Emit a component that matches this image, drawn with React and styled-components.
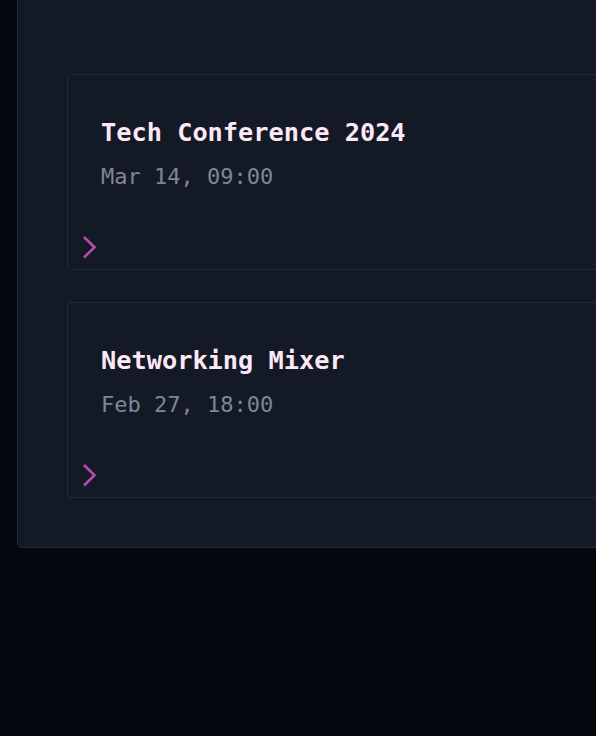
import React from 'react'
import styled, { createGlobalStyle } from 'styled-components'

const GlobalStyle = createGlobalStyle`
    html, body {
        margin: 0;
        padding: 0;
        background: #05070f;
        overflow: hidden;
    }
    body {
        font-family: "DejaVu Sans Mono", "Liberation Mono", monospace;
    }
`;

const Panel = styled.section`
    margin: -12px 0 0 17px;
    width: 760px;
    padding: 85px 0 49px 49px;
    background: #141926;
    border: 1px solid #252a36;
    border-radius: 5px;
    display: flex;
    flex-direction: column;
    gap: 32px;
`;

const Card = styled.article`
    position: relative;
    height: 196px;
    background: #141926;
    border: 1px solid #252a36;
    border-radius: 4px;
    padding: 41px 33px 0;
    box-sizing: border-box;
`;

const Title = styled.h3`
    margin: 0;
    font-size: 25.3px;
    font-weight: 700;
    line-height: 34px;
    color: #fde9f6;
`;

const When = styled.div`
    margin-top: 12px;
    font-size: 22px;
    line-height: 30px;
    color: #7f8693;
`;

const Chevron = styled.svg`
    position: absolute;
    left: 13px;
    bottom: 10px;
    width: 16px;
    height: 24px;
    color: #b84bb0;
`;

const events = [
    { title: 'Tech Conference 2024', when: 'Mar 14, 09:00' },
    { title: 'Networking Mixer', when: 'Feb 27, 18:00' },
]

export default function App () {
    return (
        <>
            <GlobalStyle />
            <Panel>
                {events.map(ev => (
                    <Card key={ev.title}>
                        <Title>{ev.title}</Title>
                        <When>{ev.when}</When>
                        <Chevron viewBox="0 0 16 24" fill="none">
                            <path d="M3 2 L13.5 12.2 L3 22.5" stroke="currentColor" strokeWidth="2.6" />
                        </Chevron>
                    </Card>
                ))}
            </Panel>
        </>
    )
}
